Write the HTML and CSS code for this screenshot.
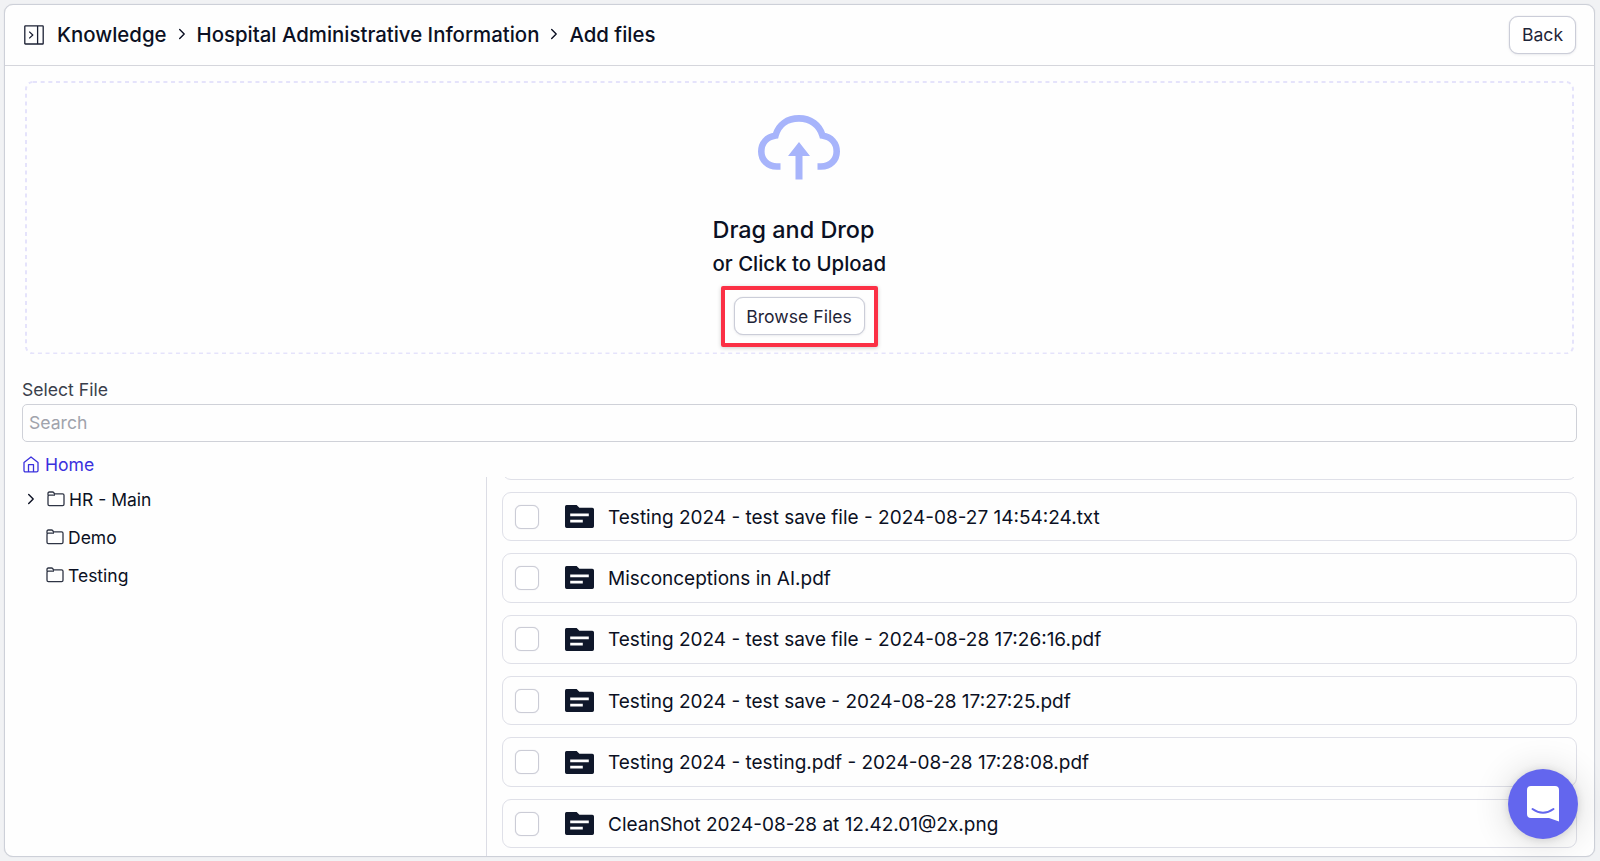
FILE: index.html
```html
<!DOCTYPE html>
<html lang="en">
<head>
<meta charset="utf-8">
<title>Add files</title>
<link rel="stylesheet" href="styles.css">
</head>
<body>
<svg class="sprite" width="0" height="0">
  <symbol id="chevron" viewBox="0 0 8 12"><path d="M1.7 1.6 6.2 6 1.7 10.4" fill="none" stroke="currentColor" stroke-width="1.4" stroke-linecap="round" stroke-linejoin="round"/></symbol>
  <symbol id="folder" viewBox="0 0 18 16"><path d="M1 4.400V2.300C1 1.500 1.500 1 2.300 1h3.300q.6 0 1 .5l1 1.400h8c.8 0 1.400.6 1.400 1.400v8.900c0 .8-.6 1.400-1.400 1.400H2.400c-.8 0-1.400-.6-1.400-1.400V5.500q0-1.300 1.400-1.300h5.600" fill="none" stroke="currentColor" stroke-width="1.300" stroke-linejoin="round"/></symbol>
  <symbol id="source" viewBox="0 0 29 23"><path fill-rule="evenodd" d="M1.5 0H11.6L14.4 2.8H27.3Q29 2.8 29 4.5V21.3Q29 23 27.3 23H1.7Q0 23 0 21.3V1.7Q0 0 1.5 0ZM5.2 8.6V11.3H23.8V8.6ZM5.2 14.8V17.5H17.8V14.8Z" fill="currentColor"/></symbol>
</svg>
<main class="panel">
  <header class="header">
    <svg class="sidebar-icon" viewBox="0 0 20 20"><g fill="none" stroke="currentColor" stroke-width="1.3" stroke-linejoin="round"><rect x=".8" y=".8" width="18.4" height="18.2" rx=".6"/><path d="M13.6 1v18M5.2 6.6 8.8 10l-3.6 3.4"/></g></svg>
    <nav class="crumbs">
      <span class="crumb">Knowledge</span>
      <svg class="chevron"><use href="#chevron"/></svg>
      <span class="crumb">Hospital Administrative Information</span>
      <svg class="chevron"><use href="#chevron"/></svg>
      <span class="crumb">Add files</span>
    </nav>
    <button class="button back">Back</button>
  </header>
  <section class="dropzone">
    <svg class="dash-frame"><rect x="1" y="1" width="1547" height="271.5" rx="7"/></svg>
    <svg class="cloud" viewBox="0 0 82 65"><path d="M22.5 51.5H19C9.500 51.500 3.300 45 3.300 36.500C3.300 28 9 22 17.500 20.500C20.500 9.500 29.500 3.400 41 3.400C52.500 3.400 61.500 10 64.500 20.500C73 22 78.700 28 78.700 36.500C78.700 45 72.500 51.500 63 51.500H59.500" fill="none" stroke="currentColor" stroke-width="6.600"/><path d="M41 27 52 41H44.500V64.500H37.500V41H30Z" fill="currentColor"/></svg>
    <div class="drop-copy">
      <div class="drop-title">Drag and Drop</div>
      <div class="drop-subtitle">or Click to Upload</div>
    </div>
    <div class="highlight"><button class="button browse">Browse Files</button></div>
  </section>
  <section class="picker">
    <label class="label" for="search">Select File</label>
    <input class="search" id="search" placeholder="Search">
    <a class="home"><svg class="home-icon" viewBox="0 0 16 17"><path d="M1 6.4 8 1l7 5.400v8.100c0 .900-.500 1.400-1.400 1.400H2.400C1.500 15.900 1 15.400 1 14.500ZM5.500 15.800V8.600h5v7.200" fill="none" stroke="currentColor" stroke-width="1.300" stroke-linejoin="round"/></svg>Home</a>
    <div class="browser">
      <div class="tree">
        <div class="node first"><svg class="chevron tree-chevron"><use href="#chevron"/></svg><svg class="folder"><use href="#folder"/></svg>HR - Main</div>
        <div class="node"><svg class="folder"><use href="#folder"/></svg>Demo</div>
        <div class="node"><svg class="folder"><use href="#folder"/></svg>Testing</div>
      </div>
      <div class="files">
        <div class="file cut"></div>
        <div class="file"><span class="check"></span><svg class="source"><use href="#source"/></svg><span class="name">Testing 2024 - test save file - 2024-08-27 14:54:24.txt</span></div>
        <div class="file"><span class="check"></span><svg class="source"><use href="#source"/></svg><span class="name">Misconceptions in AI.pdf</span></div>
        <div class="file"><span class="check"></span><svg class="source"><use href="#source"/></svg><span class="name">Testing 2024 - test save file - 2024-08-28 17:26:16.pdf</span></div>
        <div class="file"><span class="check"></span><svg class="source"><use href="#source"/></svg><span class="name">Testing 2024 - test save - 2024-08-28 17:27:25.pdf</span></div>
        <div class="file"><span class="check"></span><svg class="source"><use href="#source"/></svg><span class="name">Testing 2024 - testing.pdf - 2024-08-28 17:28:08.pdf</span></div>
        <div class="file"><span class="check"></span><svg class="source"><use href="#source"/></svg><span class="name">CleanShot 2024-08-28 at 12.42.01@2x.png</span></div>
      </div>
    </div>
  </section>
</main>
<button class="chat" aria-label="Open chat"><svg class="chat-icon" viewBox="0 0 32 36"><path d="M4 0H28Q32 0 32 4V35.500L22 32H4Q0 32 0 28V4Q0 0 4 0Z" fill="#fff"/><path d="M5.500 23Q16 30.500 26.500 23" fill="none" stroke="#6366ee" stroke-width="2" stroke-linecap="round"/></svg></button>
</body>
</html>
```
FILE: styles.css
```css
* { box-sizing: border-box; }
body {
  margin: 0;
  height: 861px;
  padding: 4px 5px 4px 4px;
  overflow: hidden;
  background: #f1f2f4;
  color: #0b1023;
  font-family: Inter, sans-serif;
  font-size: 17.600px;
}
svg { display: block; flex: none; }
.sprite { position: absolute; }
.panel {
  height: 853px;
  border: 1px solid #cdd0d8;
  border-radius: 9px;
  background: #fefefe;
  box-shadow: 0 0 1px #c5c8d0;
  overflow: hidden;
}
.header {
  height: 61px;
  display: flex;
  align-items: center;
  padding: 0 18px 0 19px;
  border-bottom: 1px solid #d5d6dc;
}
.sidebar-icon { width: 20px; height: 20px; color: #1b2033; }
.crumbs {
  display: flex;
  align-items: center;
  gap: 11px;
  margin: 0 0 2px 13px;
  font-size: 20.400px;
  font-weight: 500;
  white-space: nowrap;
}
.chevron { width: 8px; height: 12px; }
.button {
  border: 1px solid #cbcdd8;
  border-radius: 9px;
  background: #fff;
  box-shadow: 0 0 1px #cbcdd8, 0 1px 3px rgba(20, 25, 50, .07);
  color: #1f2538;
  font: 400 17.600px Inter, sans-serif;
  padding: 0;
  height: 38px;
  white-space: nowrap;
}
.back { width: 67px; margin-left: auto; padding-bottom: 1px; }
.dropzone {
  position: relative;
  width: 1549px;
  height: 273px;
  margin: 15px 0 0 20px;
  display: flex;
  flex-direction: column;
  align-items: center;
  padding: 34px 1px 0 0;
}
.dash-frame { position: absolute; inset: 0; width: 1549px; height: 273px; }
.dash-frame rect { fill: none; stroke: #e5e3fb; stroke-width: 2; stroke-dasharray: 4 3.670; }
.cloud { width: 82px; height: 65px; color: #a7b4fb; }
.drop-copy { width: 173px; margin-top: 32.500px; font-weight: 500; white-space: nowrap; }
.drop-title { font-size: 23.400px; line-height: 34px; }
.drop-subtitle { font-size: 20.400px; line-height: 34px; }
.highlight {
  margin-top: 5px;
  width: 157px;
  height: 61px;
  border: 4px solid #fb3045;
  border-radius: 2px;
  display: grid;
  place-items: center;
  box-shadow: 0 1px 4px rgba(0, 0, 0, .2);
}
.browse { width: 131px; }
.picker { padding: 21px 17px 0 17px; }
.label { display: block; height: 29px; line-height: 29px; color: #3a3f4c; }
.search {
  display: block;
  width: 100%;
  height: 38px;
  border: 1px solid #cfd1d8;
  border-radius: 5px;
  background: #fefefe;
  padding: 0 6px 1px;
  font: 400 17.600px Inter, sans-serif;
}
.search::placeholder { color: #a0a3ac; opacity: 1; }
.home { display: flex; align-items: center; gap: 6px; height: 35px; padding: 10px 0 0 1px; color: #3a30dd; }
.home-icon { width: 16px; height: 17px; }
.browser { display: flex; height: 379px; }
.tree { width: 465px; border-right: 1px solid #dcdde5; padding-top: 3px; font-size: 17.500px; }
.node { display: flex; align-items: center; height: 38px; padding-left: 24px; gap: 4px; }
.first { padding-left: 5px; }
.tree-chevron { margin-right: 8px; }
.folder { width: 18px; height: 16px; color: #2e3444; }
.files {
  flex: 1;
  height: 379px;
  padding-left: 15px;
  overflow: hidden;
  display: flex;
  flex-direction: column;
  gap: 12px;
}
.file {
  flex: none;
  display: flex;
  align-items: center;
  height: 49.400px;
  border: 1px solid #dfe0e8;
  border-radius: 9px;
  padding-left: 12px;
  font-size: 19px;
  white-space: nowrap;
}
.cut { margin-top: -46.500px; }
.name { padding-top: 1px; }
.check { width: 24px; height: 24px; border: 1px solid #cbccd6; border-radius: 6px; background: #fff; box-shadow: 0 0 1px #cbccd6; }
.source { width: 29px; height: 23px; margin: 0 14px 0 26px; color: #0f172a; }
.chat {
  position: absolute;
  left: 1508px;
  top: 769px;
  width: 70px;
  height: 70px;
  border: 0;
  border-radius: 50%;
  padding: 0;
  background: #6366ee;
  display: grid;
  place-items: center;
  box-shadow: 0 1px 8px rgba(0, 0, 0, .12), 0 2px 36px rgba(0, 0, 0, .16);
}
.chat-icon { width: 32px; height: 36px; }
```
